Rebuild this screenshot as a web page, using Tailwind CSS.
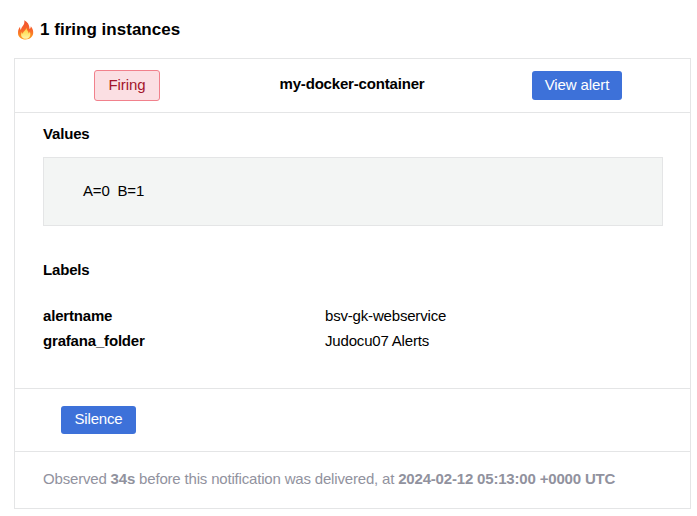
<!DOCTYPE html>
<html lang="en">
<head>
  <meta charset="utf-8">
  <title>Firing instances</title>
  <script src="https://cdn.jsdelivr.net/npm/@tailwindcss/browser@4"></script>
</head>
<body class="bg-white text-black font-['Liberation_Sans',Arial,sans-serif] text-[15px] leading-[25px] tracking-[-0.18px]">
  <div class="w-[697px] h-[516px] pl-3.5 overflow-hidden whitespace-nowrap">
    <!-- Heading -->
    <div class="h-[58px] pl-[3px] flex items-center">
      <svg class="w-[17px] h-5 mt-0.5" viewBox="0 0 17 20">
        <defs>
          <linearGradient id="flame" x1="0" y1="0" x2="0" y2="1">
            <stop offset="0" stop-color="#f0502f"/>
            <stop offset=".5" stop-color="#f8652a"/>
            <stop offset="1" stop-color="#fda51f"/>
          </linearGradient>
          <linearGradient id="core" x1="0" y1="0" x2="0" y2="1">
            <stop offset="0" stop-color="#ffc83a"/>
            <stop offset=".6" stop-color="#ffe873"/>
            <stop offset="1" stop-color="#fff3b0"/>
          </linearGradient>
        </defs>
        <path fill="url(#flame)" d="M7.200 .3C10.600 1.800 12.400 4.800 12.600 9C13.500 8.200 13.800 7.300 13.800 6.200C15.800 8.500 16.400 10.800 16.200 13.300C15.800 17 12.700 19.500 8.700 19.500C4.200 19.500 1 16.800 1 12.900C1 10.300 1.800 8.400 3.100 6.800C3 8.200 3.300 9.200 3.900 10C4.300 6.500 8.400 5 7.200 .3Z"/>
        <path fill="url(#core)" d="M9.300 7.500C9.400 9.800 11.500 11 11.700 13.400C12.300 13 12.500 12.400 12.600 11.500C14.600 15 12.600 18.800 8.700 18.800C4.800 18.800 3 15.500 4.800 12C5 12.900 5.300 13.400 6 13.700C6 11.200 9.200 10.500 9.300 7.500Z"/>
      </svg>
      <h1 class="ml-1.5 text-[17px] font-bold tracking-[0.02px]">1 firing instances</h1>
    </div>

    <!-- Alert card -->
    <div class="w-[677px] h-[451px] border border-[#e4e5e6]">
      <div class="h-[54px] pt-[11px] flex items-start border-b border-[#e4e5e6]">
        <div class="w-[224px] flex justify-center">
          <span class="w-[66px] h-[31px] leading-[27px] text-center rounded-[3px] border border-[#f1818c] bg-[#fbdfe3] text-[#a3142b] tracking-[-0.05px]">Firing</span>
        </div>
        <div class="w-[226px] h-[29px] leading-[27px] text-center font-bold">my-docker-container</div>
        <div class="w-[224px] pt-px flex justify-center">
          <a class="w-[90px] h-[29px] leading-[28px] text-center rounded-[3px] bg-[#3d71d9] text-white tracking-[-0.1px]">View alert</a>
        </div>
      </div>

      <!-- Values and labels -->
      <div class="h-[276px] px-7 pt-2 border-b border-[#e4e5e6]">
        <h2 class="font-bold">Values</h2>
        <div class="mt-[11px] w-[620px] h-[69px] pl-[39px] leading-[65px] whitespace-pre border border-[#e4e5e6] bg-[#f3f5f4]">A=0  B=1</div>
        <h2 class="mt-[31px] font-bold">Labels</h2>
        <div class="mt-[21px] grid grid-cols-[282px_auto]">
          <div class="font-bold">alertname</div>
          <div>bsv-gk-webservice</div>
          <div class="font-bold">grafana_folder</div>
          <div>Judocu07 Alerts</div>
        </div>
      </div>

      <div class="h-[63px] pl-[46px] pt-[17px] border-b border-[#e4e5e6]">
        <a class="block w-[75px] h-7 leading-[25px] text-center rounded-[3px] bg-[#3d71d9] text-white">Silence</a>
      </div>

      <div class="pl-7 pt-3.5 text-[#91929e]">Observed <b>34s</b> before this notification was delivered, at <b>2024-02-12 05:13:00 +0000 UTC</b></div>
    </div>
  </div>
</body>
</html>
